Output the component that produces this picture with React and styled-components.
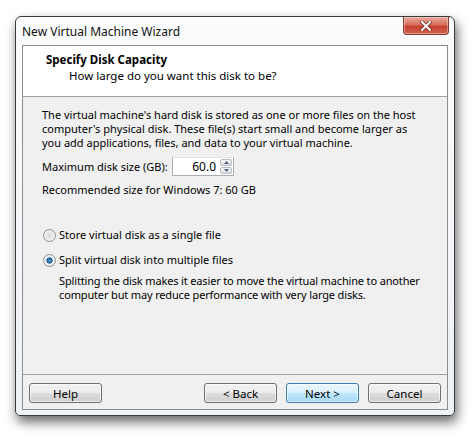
import React from "react";
import styled, { createGlobalStyle } from "styled-components";

const GlobalStyle = createGlobalStyle`
  html, body {
    margin: 0;
    padding: 0;
    background: #ffffff;
  }
  body {
    font-family: "Noto Sans", "Open Sans", sans-serif;
    font-size: 11px;
    color: #000;
  }
`;

const Page = styled.div`
  width: 472px;
  height: 438px;
  padding: 16px 0 0 15px;
  box-sizing: border-box;
`;

const Window = styled.div`
  width: 440px;
  height: 400px;
  box-sizing: border-box;
  border: 1px solid #3a3a3a;
  border-radius: 6px 6px 5px 5px;
  padding: 0 6px 5px 6px;
  background: linear-gradient(to bottom, #fbfcfd 0%, #eef1f5 100%);
  box-shadow: 2px 6px 12px rgba(0, 0, 0, 0.6);
  display: flex;
  flex-direction: column;
`;

const TitleBar = styled.div`
  height: 28px;
  display: flex;
  justify-content: space-between;
  align-items: flex-start;
  margin-right: -1px;
`;

const Title = styled.div`
  padding-top: 7px;
  font-size: 12px;
  line-height: 15px;
  color: #111;
`;

const CloseButton = styled.div`
  width: 46px;
  height: 18px;
  box-sizing: border-box;
  border: 1px solid #8c3b31;
  border-top: none;
  border-radius: 0 0 4px 4px;
  background: linear-gradient(
    to bottom,
    #e9a99c 0%,
    #d7705f 45%,
    #c4402e 55%,
    #d3664f 100%
  );
  box-shadow: inset 0 0 0 1px rgba(255, 255, 255, 0.35);
  display: flex;
  align-items: center;
  justify-content: center;
`;

const Client = styled.div`
  flex: 1;
  border: 1px solid #8d8d8d;
  background: #f0f0f0;
  display: flex;
  flex-direction: column;
`;

const Header = styled.div`
  height: 51px;
  background: #ffffff;
  border-bottom: 1px solid #a0a0a0;
  padding: 6px 0 0 23px;
  box-sizing: border-box;
  font-size: 11.5px;
  line-height: 16px;
`;

const HeaderTitle = styled.div`
  font-weight: 700;
`;

const HeaderSub = styled.div`
  padding-left: 23px;
`;

const Body = styled.div`
  flex: 1;
  padding: 11px 19px 0 19px;
  line-height: 14px;
`;

const Para = styled.p`
  margin: 0;
`;

const SizeRow = styled.div`
  display: flex;
  align-items: center;
  margin-top: 7px;
`;

const Label = styled.span`
  width: 130px;
`;

const SpinBox = styled.div`
  width: 62px;
  height: 19px;
  box-sizing: border-box;
  border: 1px solid #abadb3;
  border-top-color: #e3e3e3;
  border-radius: 1px;
  background: #fff;
  display: flex;
  align-items: stretch;
`;

const SpinValue = styled.div`
  flex: 1;
  text-align: right;
  padding-right: 4px;
  font-size: 12px;
  line-height: 17px;
`;

const SpinArrows = styled.div`
  width: 12px;
  display: flex;
  flex-direction: column;
  gap: 1px;
  padding: 1px 1px 1px 0;
`;

const SpinArrow = styled.div`
  flex: 1;
  border: 1px solid #b9bcc1;
  border-radius: 2px;
  background: linear-gradient(to bottom, #f6f6f6, #dedede);
  display: flex;
  align-items: center;
  justify-content: center;
`;

const Note = styled.div`
  margin-top: 7px;
`;

const RadioGroup = styled.div`
  margin-top: 31px;
  display: flex;
  flex-direction: column;
  gap: 11px;
`;

const RadioRow = styled.label`
  display: flex;
  align-items: center;
  gap: 3px;
  margin-left: 1px;
`;

const RadioDot = styled.span`
  width: 13px;
  height: 13px;
  box-sizing: border-box;
  border-radius: 50%;
  border: 1px solid #8e8f8f;
  background: ${p =>
    p.checked
      ? "radial-gradient(circle, #4b95cc 0%, #1d5a8e 38%, #e8eef4 42%, #f4f4f4 100%)"
      : "radial-gradient(circle, #d9d9d9 0%, #eaeaea 45%, #f8f8f8 100%)"};
`;

const RadioHint = styled.p`
  margin: 7px 0 0 17px;
  line-height: 14px;
  white-space: nowrap;
  letter-spacing: -0.15px;
`;

const Footer = styled.div`
  border-top: 1px solid #a0a0a0;
  padding: 8px 6px 6px 6px;
  display: flex;
  gap: 9px;
`;

const Spacer = styled.div`
  flex: 1;
`;

const Button = styled.div`
  width: 73px;
  height: 20px;
  box-sizing: border-box;
  border: 1px solid ${p => (p.primary ? "#3c7fb1" : "#707070")};
  border-radius: 3px;
  background: ${p =>
    p.primary
      ? "linear-gradient(to bottom, #eaf6fd 0%, #d9f0fc 50%, #bee6fd 51%, #a7d9f5 100%)"
      : "linear-gradient(to bottom, #f2f2f2 0%, #ebebeb 50%, #dddddd 51%, #cfcfcf 100%)"};
  box-shadow: inset 0 0 0 1px rgba(255, 255, 255, 0.6);
  display: flex;
  align-items: center;
  justify-content: center;
  font-size: 11.5px;
`;

const App = () => {
  return (
    <>
      <GlobalStyle />
      <Page>
        <Window>
          <TitleBar>
            <Title>New Virtual Machine Wizard</Title>
            <CloseButton>
              <svg width="12" height="10" viewBox="0 0 12 10">
                <path
                  d="M2 1 L10 9 M10 1 L2 9"
                  stroke="#6b2a22"
                  strokeWidth="3.4"
                  strokeLinecap="square"
                />
                <path
                  d="M2 1 L10 9 M10 1 L2 9"
                  stroke="#ffffff"
                  strokeWidth="2"
                  strokeLinecap="square"
                />
              </svg>
            </CloseButton>
          </TitleBar>
          <Client>
            <Header>
              <HeaderTitle>Specify Disk Capacity</HeaderTitle>
              <HeaderSub>How large do you want this disk to be?</HeaderSub>
            </Header>
            <Body>
              <Para>
                The virtual machine's hard disk is stored as one or more files
                on the host computer's physical disk. These file(s) start small
                and become larger as you add applications, files, and data to
                your virtual machine.
              </Para>
              <SizeRow>
                <Label>Maximum disk size (GB):</Label>
                <SpinBox>
                  <SpinValue>60.0</SpinValue>
                  <SpinArrows>
                    <SpinArrow>
                      <svg width="5" height="3" viewBox="0 0 5 3">
                        <path d="M0 3 L2.5 0 L5 3 Z" fill="#4d6185" />
                      </svg>
                    </SpinArrow>
                    <SpinArrow>
                      <svg width="5" height="3" viewBox="0 0 5 3">
                        <path d="M0 0 L2.5 3 L5 0 Z" fill="#4d6185" />
                      </svg>
                    </SpinArrow>
                  </SpinArrows>
                </SpinBox>
              </SizeRow>
              <Note>Recommended size for Windows 7: 60 GB</Note>
              <RadioGroup>
                <RadioRow>
                  <RadioDot />
                  Store virtual disk as a single file
                </RadioRow>
                <RadioRow>
                  <RadioDot checked />
                  Split virtual disk into multiple files
                </RadioRow>
              </RadioGroup>
              <RadioHint>
                Splitting the disk makes it easier to move the virtual machine
                to another
                <br />
                computer but may reduce performance with very large disks.
              </RadioHint>
            </Body>
            <Footer>
              <Button>Help</Button>
              <Spacer />
              <Button>&lt; Back</Button>
              <Button primary>Next &gt;</Button>
              <Button>Cancel</Button>
            </Footer>
          </Client>
        </Window>
      </Page>
    </>
  );
};

export default App;
